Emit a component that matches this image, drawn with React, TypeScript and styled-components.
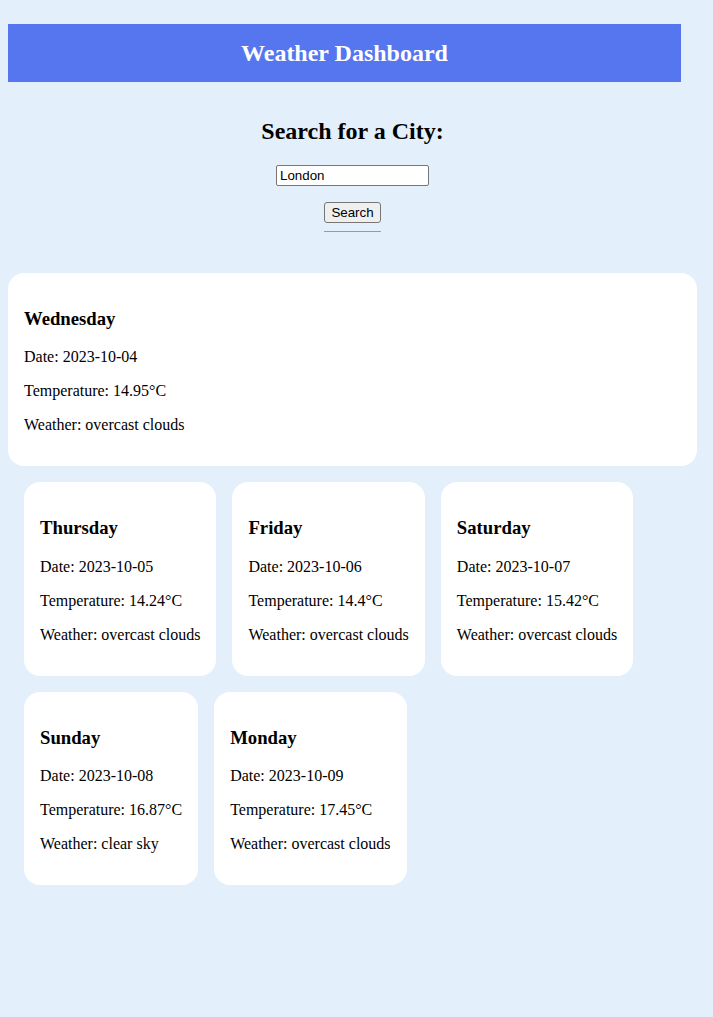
import React, { useState } from "react";
import styled, { createGlobalStyle } from "styled-components";

type Day = {
  name: string;
  date: string;
  temp: string;
  weather: string;
};

const today: Day = {
  name: "Wednesday",
  date: "2023-10-04",
  temp: "14.95",
  weather: "overcast clouds",
};

const forecast: Day[] = [
  { name: "Thursday", date: "2023-10-05", temp: "14.24", weather: "overcast clouds" },
  { name: "Friday", date: "2023-10-06", temp: "14.4", weather: "overcast clouds" },
  { name: "Saturday", date: "2023-10-07", temp: "15.42", weather: "overcast clouds" },
  { name: "Sunday", date: "2023-10-08", temp: "16.87", weather: "clear sky" },
  { name: "Monday", date: "2023-10-09", temp: "17.45", weather: "overcast clouds" },
];

const WeatherCard = ({ day, wide }: { day: Day; wide?: boolean }) => (
  <Card $wide={wide}>
    <DayName>{day.name}</DayName>
    <Line>Date: {day.date}</Line>
    <Line>Temperature: {day.temp}°C</Line>
    <Line>Weather: {day.weather}</Line>
  </Card>
);

const App = () => {
  const [city, setCity] = useState("London");

  return (
    <>
      <GlobalStyle />
      <Header>
        <Title>Weather Dashboard</Title>
      </Header>
      <SearchSection>
        <SearchTitle>Search for a City:</SearchTitle>
        <SearchForm onSubmit={(e) => e.preventDefault()}>
          <CityInput value={city} onChange={(e) => setCity(e.target.value)} />
          <ButtonWrap>
            <SearchButton type='submit'>Search</SearchButton>
            <Divider />
          </ButtonWrap>
        </SearchForm>
      </SearchSection>
      <WeatherCard day={today} wide />
      <ForecastGrid>
        {forecast.map((d) => (
          <WeatherCard key={d.date} day={d} />
        ))}
      </ForecastGrid>
    </>
  );
};

export default App;

const GlobalStyle = createGlobalStyle`
  html, body {
    background: #e3f0fc;
  }
  body {
    margin: 8px;
    font-family: "Liberation Serif", "Times New Roman", serif;
    color: #000;
  }
`;

const Header = styled.header`
  margin: 16px 24px 0 0;
  background: #5576ef;
  padding: 16px 0;
  text-align: center;
`;

const Title = styled.h1`
  margin: 0;
  font-size: 24px;
  line-height: 26px;
  font-weight: bold;
  color: #fff;
`;

const SearchSection = styled.section`
  padding-top: 16px;
  margin-right: 8px;
  text-align: center;
`;

const SearchTitle = styled.h2`
  font-size: 24px;
  font-weight: bold;
  margin: 20px 0;
`;

const SearchForm = styled.form`
  display: flex;
  flex-direction: column;
  align-items: center;
  gap: 16px;
`;

const CityInput = styled.input`
  box-sizing: border-box;
  width: 153px;
  height: 21px;
  padding: 1px 3px;
  border: 1px solid #767676;
  border-radius: 2px;
  font-family: "Liberation Sans", Arial, sans-serif;
  font-size: 13.33px;
  color: #000;
  background: #fff;
`;

const ButtonWrap = styled.div`
  display: flex;
  flex-direction: column;
`;

const SearchButton = styled.button`
  box-sizing: border-box;
  height: 21px;
  padding: 1px 6px;
  border: 1px solid #767676;
  border-radius: 3px;
  background: #efefef;
  font-family: "Liberation Sans", Arial, sans-serif;
  font-size: 13.33px;
  color: #000;
`;

const Divider = styled.div`
  height: 1px;
  margin-top: 8px;
  background: #9a9a9a;
`;

const Card = styled.div<{ $wide?: boolean }>`
  background: #fff;
  border-radius: 16px;
  padding: 16px;
  margin: ${(p) => (p.$wide ? "41px 8px 0 0" : "0")};
`;

const ForecastGrid = styled.div`
  display: flex;
  flex-wrap: wrap;
  align-items: flex-start;
  gap: 16px;
  padding: 16px;
`;

const DayName = styled.h3`
  font-size: 18.72px;
  font-weight: bold;
  margin: 18.72px 0;
`;

const Line = styled.p`
  font-size: 16px;
  margin: 16px 0;
`;
